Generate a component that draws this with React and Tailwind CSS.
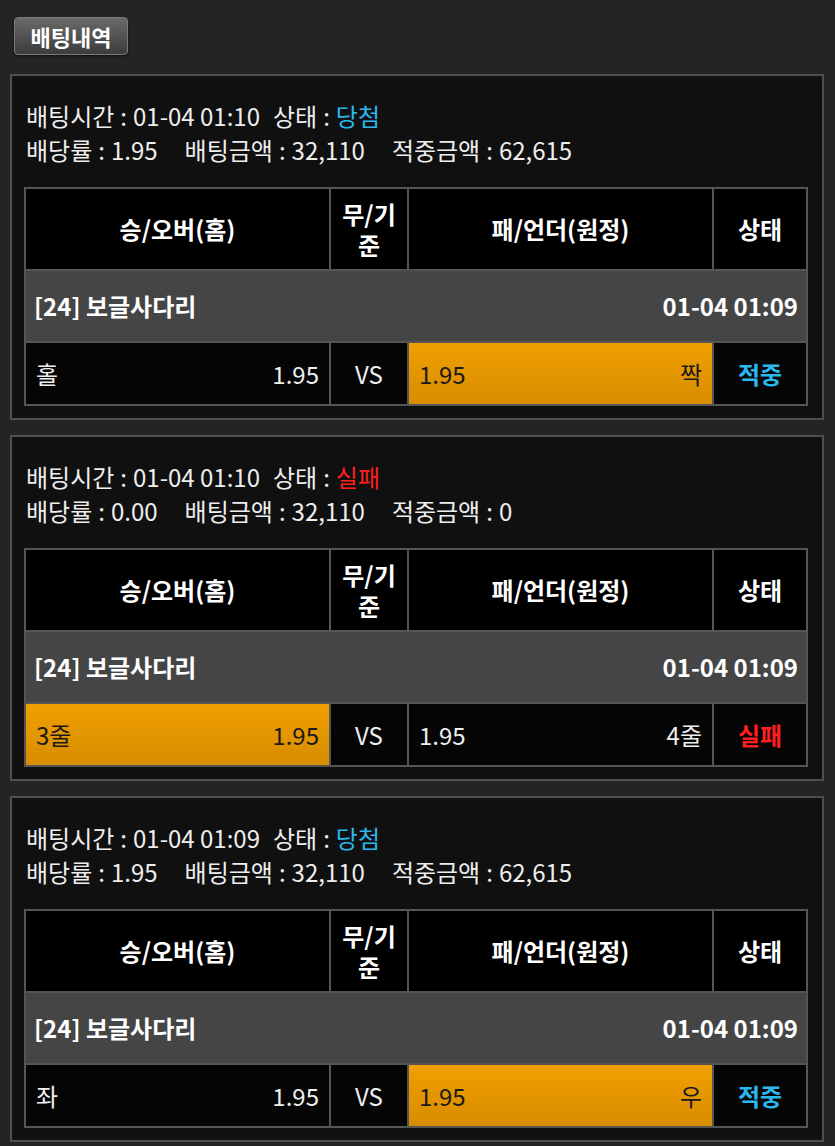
import React from "react";

const bets = [
  {
    time: "01-04 01:10",
    status: "당첨",
    odds: "1.95",
    amount: "32,110",
    win: "62,615",
    home: "홀",
    away: "짝",
    pick: "away",
  },
  {
    time: "01-04 01:10",
    status: "실패",
    odds: "0.00",
    amount: "32,110",
    win: "0",
    home: "3줄",
    away: "4줄",
    pick: "home",
  },
  {
    time: "01-04 01:09",
    status: "당첨",
    odds: "1.95",
    amount: "32,110",
    win: "62,615",
    home: "좌",
    away: "우",
    pick: "away",
  },
];

const statusColor = (s) => (s === "당첨" ? "text-[#2bb8ee]" : "text-[#ff1f1f]");

const Colon = () => <span className="mx-[6px]">:</span>;

function BetCard({ bet }) {
  const won = bet.status === "당첨";
  const orange = "bg-gradient-to-b from-[#f0a000] to-[#d88c00] text-[#1a1a1a]";
  const dark = "bg-[#050505] text-[#eeeeee]";

  return (
    <div className="ml-[10px] w-[814px] border-2 border-[#4f4f4f] bg-[#101010] px-[12px] pb-[12px] pt-[23px]">
      <div className="px-[2px] text-[24px] leading-[34px] text-[#eeeeee]">
        <div>
          배팅시간<Colon />{bet.time}
          <span className="ml-[13px]">상태</span>
          <Colon />
          <span className={statusColor(bet.status)}>{bet.status}</span>
        </div>
        <div>
          배당률<Colon />{bet.odds}
          <span className="ml-[27px]">배팅금액<Colon />{bet.amount}</span>
          <span className="ml-[27px]">적중금액<Colon />{bet.win}</span>
        </div>
      </div>

      <table className="mt-[20px] w-[784px] table-fixed border-collapse border-2 border-[#555555] text-[24px]">
        <colgroup>
          <col className="w-[305px]" />
          <col className="w-[78px]" />
          <col className="w-[305px]" />
          <col className="w-[94px]" />
        </colgroup>
        <thead>
          <tr className="h-[82px] bg-black font-bold text-white">
            <th className="border-2 border-[#555555]">승/오버(홈)</th>
            <th className="border-2 border-[#555555] px-[8px] leading-[31px]">무/기준</th>
            <th className="border-2 border-[#555555]">패/언더(원정)</th>
            <th className="border-2 border-[#555555]">상태</th>
          </tr>
        </thead>
        <tbody>
          <tr className="h-[72px] bg-[#454545] font-bold text-white">
            <td colSpan={4} className="border-2 border-[#555555] px-[8px]">
              <div className="flex items-center justify-between">
                <span>[24] 보글사다리</span>
                <span>01-04 01:09</span>
              </div>
            </td>
          </tr>
          <tr className="h-[63px]">
            <td className={`border-2 border-[#555555] px-[10px] ${bet.pick === "home" ? orange : dark}`}>
              <div className="flex items-center justify-between">
                <span>{bet.home}</span>
                <span>1.95</span>
              </div>
            </td>
            <td className="border-2 border-[#555555] bg-[#050505] text-center text-[#eeeeee]">VS</td>
            <td className={`border-2 border-[#555555] px-[10px] ${bet.pick === "away" ? orange : dark}`}>
              <div className="flex items-center justify-between">
                <span>1.95</span>
                <span>{bet.away}</span>
              </div>
            </td>
            <td className={`border-2 border-[#555555] bg-[#050505] text-center font-bold ${statusColor(bet.status)}`}>
              {won ? "적중" : "실패"}
            </td>
          </tr>
        </tbody>
      </table>
    </div>
  );
}

export default function App() {
  return (
    <div className="min-h-[1146px] bg-[#242424] pt-[17px] font-['Noto_Sans_CJK_KR','Noto_Sans',sans-serif]">
      <div className="ml-[14px] inline-flex h-[38px] w-[114px] items-center justify-center rounded-[4px] border border-[#7a7a7a] bg-gradient-to-b from-[#6a6a6a] to-[#3c3c3c] text-[22px] font-bold text-white shadow-[0_1px_2px_rgba(0,0,0,0.6)]">
        배팅내역
      </div>
      <div className="mt-[19px] flex flex-col gap-[15px]">
        {bets.map((b, i) => (
          <BetCard key={i} bet={b} />
        ))}
      </div>
    </div>
  );
}
